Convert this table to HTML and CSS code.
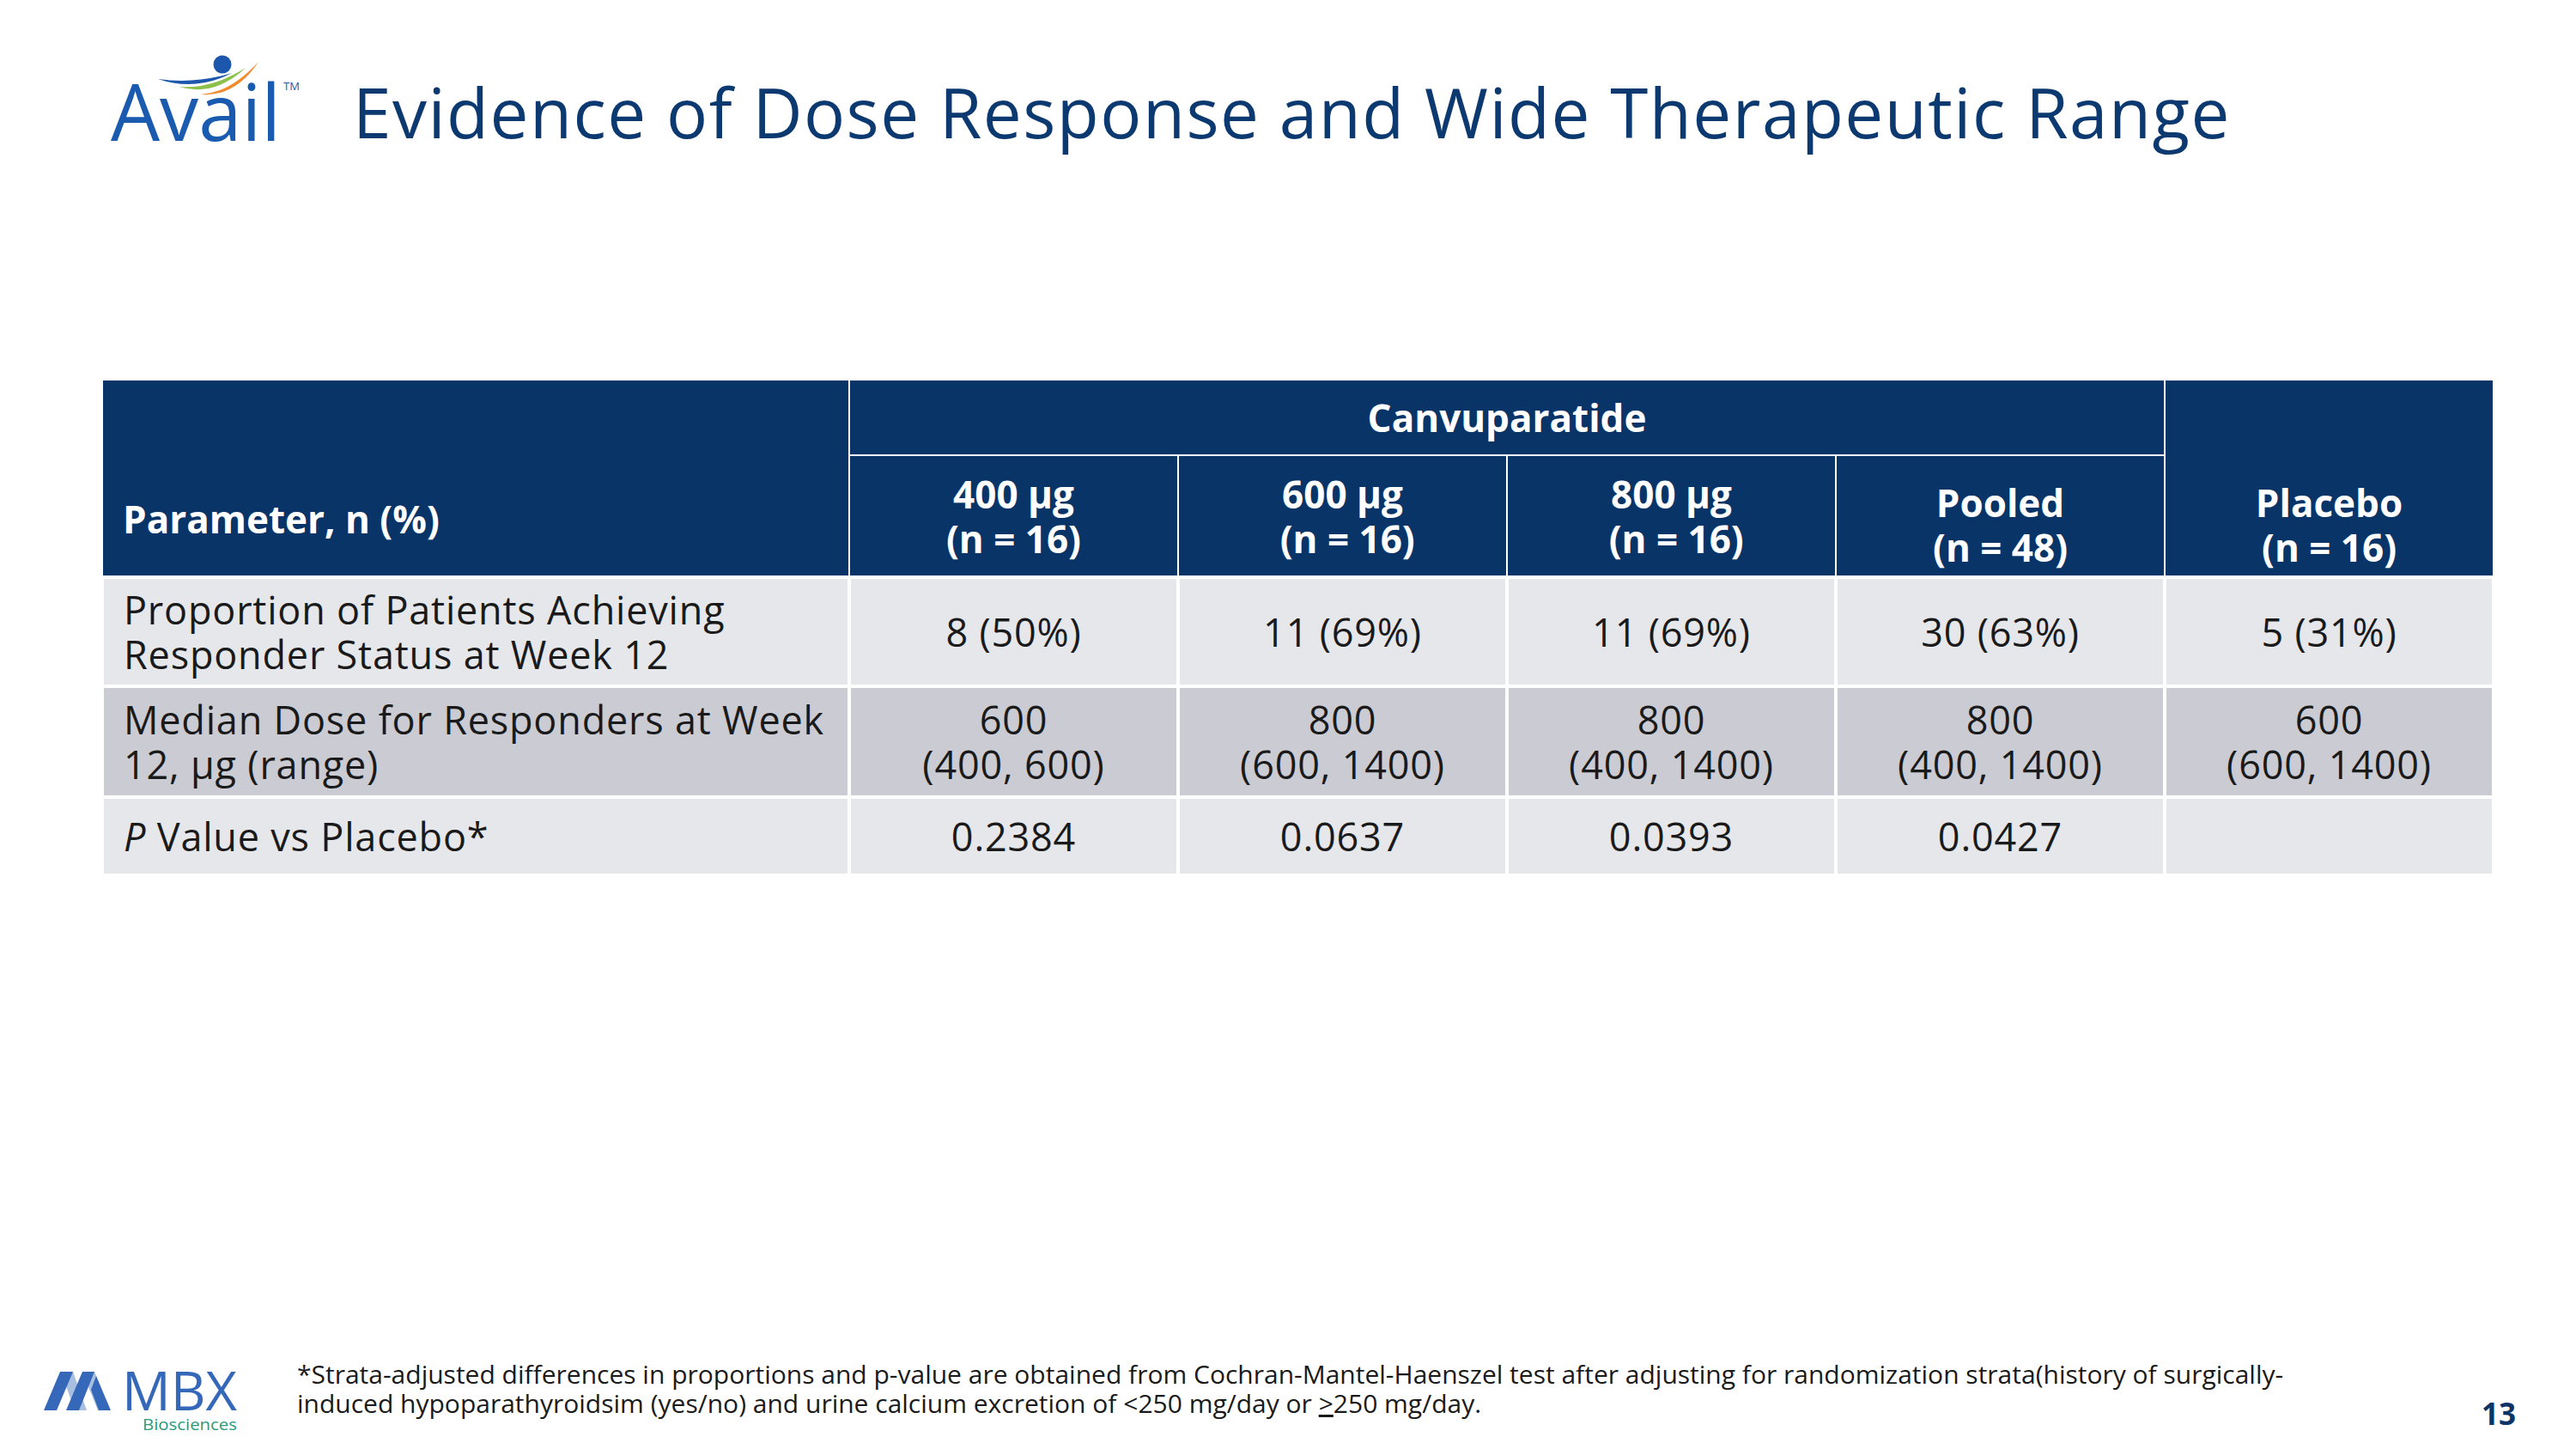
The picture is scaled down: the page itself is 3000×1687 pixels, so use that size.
FILE: index.html
```html
<!DOCTYPE html>
<html lang="en">
<head>
<meta charset="utf-8">
<title>Evidence of Dose Response and Wide Therapeutic Range</title>
<link rel="stylesheet" href="styles.css">
</head>
<body>
<div class="slide">
  <header class="top">
    <svg class="avail-logo" viewBox="0 0 220 110" width="220" height="110">
      <path d="M56 29 Q100 44 142 22 Q100 35 56 29 Z" fill="#1d56ad"/>
      <path d="M80 38 Q122 50 158 16 Q118 41 80 38 Z" fill="#8cc04a"/>
      <path d="M106 47 Q146 50 173 9 Q140 45 106 47 Z" fill="#f08a2c"/>
      <circle cx="131" cy="12" r="10.5" fill="#1d56ad"/>
      <text x="1" y="101" class="avail-word" textLength="198" lengthAdjust="spacingAndGlyphs">Avail</text>
      <text x="202" y="42" class="avail-tm">TM</text>
    </svg>
    <h1 class="title">Evidence of Dose Response and Wide Therapeutic Range</h1>
  </header>

  <table class="data">
    <colgroup>
      <col class="c-param">
      <col class="c-num"><col class="c-num"><col class="c-num"><col class="c-num"><col class="c-num">
    </colgroup>
    <thead>
      <tr class="h1">
        <th rowspan="2" class="param">Parameter, n (%)</th>
        <th colspan="4" class="group">Canvuparatide</th>
        <th rowspan="2" class="low">Placebo<br>(n = 16)</th>
      </tr>
      <tr class="h2">
        <th>400 µg<br>(n = 16)</th>
        <th>600 µg<br>&nbsp;(n = 16)</th>
        <th>800 µg<br>&nbsp;(n = 16)</th>
        <th class="low">Pooled<br>(n = 48)</th>
      </tr>
    </thead>
    <tbody>
      <tr class="r1 light">
        <td class="label">Proportion of Patients Achieving<br>Responder Status at Week 12</td>
        <td>8 (50%)</td><td>11 (69%)</td><td>11 (69%)</td><td>30 (63%)</td><td>5 (31%)</td>
      </tr>
      <tr class="r2 dark">
        <td class="label">Median Dose for Responders at Week<br>12, µg (range)</td>
        <td>600<br>(400, 600)</td><td>800<br>(600, 1400)</td><td>800<br>(400, 1400)</td><td>800<br>(400, 1400)</td><td>600<br>(600, 1400)</td>
      </tr>
      <tr class="r3 light">
        <td class="label"><i>P</i> Value vs Placebo*</td>
        <td>0.2384</td><td>0.0637</td><td>0.0393</td><td>0.0427</td><td></td>
      </tr>
    </tbody>
  </table>

  <footer class="bottom">
    <svg class="mbx-logo" viewBox="0 0 240 76" width="240" height="76">
      <path d="M27 5 H41 L57 50 H43 Z" fill="#a9bfe0"/>
      <path d="M52 5 H66 L84 50 H70 Z" fill="#a9bfe0"/>
      <path d="M7 50 L26 5 H41 L22 50 Z" fill="#3568b8"/>
      <path d="M33 50 L52 5 H66 L48 50 Z" fill="#3568b8"/>
      <path d="M68 10 L85 50 H71 L62 26 Z" fill="#3568b8"/>
      <text x="98" y="50" class="mbx-word" textLength="134" lengthAdjust="spacingAndGlyphs">MBX</text>
      <text x="122" y="73" class="mbx-sub" textLength="110" lengthAdjust="spacingAndGlyphs">Biosciences</text>
    </svg>
    <p class="footnote">*Strata-adjusted differences in proportions and p-value are obtained from Cochran-Mantel-Haenszel test after adjusting for randomization strata(history of surgically-<br>induced hypoparathyroidsim (yes/no) and urine calcium excretion of &lt;250 mg/day or <u>&gt;</u>250 mg/day.</p>
    <span class="page">13</span>
  </footer>
</div>
</body>
</html>
```

FILE: styles.css
```css
html, body {
  margin: 0;
  padding: 0;
  background: #ffffff;
}

.slide {
  width: 3000px;
  height: 1687px;
  display: flex;
  flex-direction: column;
  font-family: "Open Sans", "Liberation Sans", sans-serif;
  color: #1a1a1a;
  overflow: hidden;
}

.top {
  display: flex;
  align-items: flex-start;
  padding: 63px 0 0 128px;
}

.avail-logo {
  display: block;
  flex: none;
  overflow: visible;
}

.avail-word {
  font-family: "Open Sans", sans-serif;
  font-size: 92px;
  fill: #1a5bb0;
}

.avail-tm {
  font-family: "Open Sans", sans-serif;
  font-size: 13px;
  fill: #1a5bb0;
}

.title {
  margin: 27px 0 0 63px;
  font-size: 80px;
  line-height: 80px;
  font-weight: 400;
  letter-spacing: 1.5px;
  color: #0c3a70;
  white-space: nowrap;
}

.data {
  margin: 268px 0 0 117px;
  width: 2785px;
  table-layout: fixed;
  border-collapse: collapse;
}

.c-param { width: 870px; }
.c-num { width: 383px; }

.data th {
  background: #083468;
  color: #ffffff;
  font-weight: 700;
  font-size: 44px;
  line-height: 52px;
  text-align: center;
  vertical-align: middle;
  border: 2px solid #ffffff;
  padding: 0;
}

.data .h1 { height: 88px; }
.data .h2 { height: 142px; }

.data th.param {
  text-align: left;
  vertical-align: bottom;
  padding: 0 0 40px 23px;
}

.data th.low {
  vertical-align: bottom;
  padding-bottom: 7px;
}

.data td {
  font-size: 45px;
  line-height: 52px;
  letter-spacing: 0.8px;
  text-align: center;
  vertical-align: middle;
  border: 4px solid #ffffff;
  padding: 0;
}

.data td.label {
  text-align: left;
  padding-left: 23px;
}

.data .light td { background: #e6e7ea; }
.data .dark td { background: #cbccd3; }

.data .r1 { height: 127px; }
.data .r2 { height: 129px; }
.data .r3 { height: 91px; }

.bottom {
  margin-top: auto;
  display: flex;
  align-items: flex-start;
  padding: 0 70px 19px 44px;
}

.mbx-logo {
  display: block;
  flex: none;
  margin-top: 9px;
  overflow: visible;
}

.mbx-word {
  font-family: "Open Sans", sans-serif;
  font-size: 62px;
  font-weight: 500;
  fill: #3568b8;
}

.mbx-sub {
  font-family: "Open Sans", sans-serif;
  font-size: 19px;
  fill: #2a9a78;
}

.footnote {
  margin: 0 0 0 62px;
  font-size: 30px;
  line-height: 34px;
  color: #1a1a1a;
  white-space: nowrap;
}

.page {
  margin: 45px 0 0 auto;
  font-size: 35px;
  line-height: 35px;
  font-weight: 700;
  color: #0c3466;
}
```
